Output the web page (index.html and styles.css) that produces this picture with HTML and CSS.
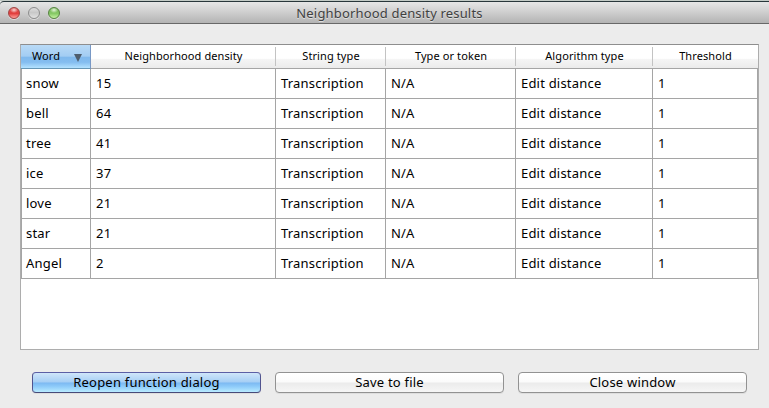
FILE: index.html
```html
<!DOCTYPE html>
<html lang="en">
<head>
<meta charset="utf-8">
<title>Neighborhood density results</title>
<link rel="stylesheet" href="styles.css">
</head>
<body>
<div class="window">
  <header class="titlebar">
    <div class="lights"><span class="light red"></span><span class="light gray"></span><span class="light green"></span></div>
    <h1 class="title">Neighborhood density results</h1>
  </header>
  <main class="content">
    <div class="table">
      <div class="row head">
        <div class="sorted"><span>Word</span><svg class="arrow" width="8" height="8" viewBox="0 0 8 8"><path d="M0 0H8L4 8Z"/></svg></div>
        <div>Neighborhood density</div><div>String type</div><div>Type or token</div><div>Algorithm type</div><div>Threshold</div>
      </div>
      <div class="row"><div>snow</div><div>15</div><div>Transcription</div><div>N/A</div><div>Edit distance</div><div>1</div></div>
      <div class="row"><div>bell</div><div>64</div><div>Transcription</div><div>N/A</div><div>Edit distance</div><div>1</div></div>
      <div class="row"><div>tree</div><div>41</div><div>Transcription</div><div>N/A</div><div>Edit distance</div><div>1</div></div>
      <div class="row"><div>ice</div><div>37</div><div>Transcription</div><div>N/A</div><div>Edit distance</div><div>1</div></div>
      <div class="row"><div>love</div><div>21</div><div>Transcription</div><div>N/A</div><div>Edit distance</div><div>1</div></div>
      <div class="row"><div>star</div><div>21</div><div>Transcription</div><div>N/A</div><div>Edit distance</div><div>1</div></div>
      <div class="row"><div>Angel</div><div>2</div><div>Transcription</div><div>N/A</div><div>Edit distance</div><div>1</div></div>
    </div>
    <div class="buttons">
      <button class="btn primary">Reopen function dialog</button>
      <button class="btn">Save to file</button>
      <button class="btn">Close window</button>
    </div>
  </main>
</div>
</body>
</html>
```
FILE: styles.css
```css
* { box-sizing: border-box; }
body {
  margin: 0;
  background: #ececec;
  color: #000;
  font: 13px "Noto Sans", "Open Sans", sans-serif;
  overflow: hidden;
}
.window {
  height: 408px;
  border-top: 1px solid #c3cbc6;
}
.titlebar {
  height: 23px;
  display: grid;
  grid-template-columns: 1fr auto 1fr;
  align-items: center;
  border-top: 1px solid #28363a;
  border-bottom: 1px solid #686868;
  border-top-left-radius: 4px;
  background: linear-gradient(#e6e6e6, #d0d0d0 45%, #b3b3b3);
}
.lights { display: flex; gap: 8px; padding-left: 8px; }
.light {
  width: 12px;
  height: 12px;
  border-radius: 50%;
  border: 1px solid #888;
  box-shadow: 0 1px 0 #dcdcdc;
}
.red { border-color: #a04442; background: radial-gradient(ellipse 4px 3px at 50% 2px, #fbd5d3, transparent), linear-gradient(#d95553, #e23f3e 55%, #ff9f9a); }
.gray { border-color: #8d8d8d; background: linear-gradient(#dedede, #c8c8c8 45%, #e2e2e2); }
.green { border-color: #55833f; background: radial-gradient(ellipse 4px 3px at 50% 2px, #e4f6da, transparent), linear-gradient(#7cb560, #86c965 55%, #c4f2a2); }
.title {
  margin: 0;
  font-size: 13px;
  font-weight: 400;
  line-height: 20px;
  color: #414141;
  text-shadow: 0 1px 0 #e0e0e0;
  letter-spacing: .17px;
  position: relative;
  left: 5px;
}
.content { padding: 20px 10px 0 20px; }
.table {
  height: 306px;
  background: #fff;
  border: 1px solid #adadad;
  border-top-color: #8e8e8e;
}
.row {
  display: grid;
  grid-template-columns: 69px 185px 110px 130px 137px 105px;
  width: 737px;
  height: 30px;
  border-left: 1px solid #a5a5a5;
}
.row > div {
  border-right: 1px solid #a5a5a5;
  border-bottom: 1px solid #a5a5a5;
  padding-left: 5px;
  line-height: 29px;
  letter-spacing: .2px;
  white-space: nowrap;
}
.row > div:first-child { padding-left: 4px; }
.head {
  grid-template-columns: 70px 185px 110px 130px 137px 105px;
  height: 24px;
  border-left: 0;
}
.head > div {
  padding: 0;
  text-align: center;
  font-size: 11px;
  line-height: 22px;
  letter-spacing: .1px;
  border-right: 0;
  background:
    linear-gradient(#c3c3c3, #c3c3c3) right 2px / 1px 19px no-repeat,
    linear-gradient(#fff 0 58%, #f5f5f5 62%, #ebebeb);
}
.head > div:last-child { background: linear-gradient(#fff 0 58%, #f5f5f5 62%, #ebebeb); }
.head > .sorted:first-child {
  display: flex;
  align-items: center;
  justify-content: space-between;
  padding: 0 8px 0 11px;
  border-right: 1px solid #7898c5;
  border-bottom-color: #6696b5;
  background: linear-gradient(#b9daf6, #a3cdf3 48%, #80b9ed 54%, #84bdf0 75%, #b4e2ff);
}
.sorted span { height: 23px; }
.arrow { fill: #4e5d6d; margin-top: 2px; }
.buttons {
  display: flex;
  gap: 14px;
  padding: 22px 0 0 12px;
}
.btn {
  width: 229px;
  height: 21px;
  padding: 0;
  border: 1px solid #929292;
  border-radius: 4px;
  background: linear-gradient(#fff, #fbfbfb 48%, #ebebeb 52%, #f6f6f6);
  box-shadow: 0 1px 0 #dedede;
  font: inherit;
  line-height: 19px;
  letter-spacing: .2px;
  color: #000;
}
.primary {
  border-color: #5c5fa5 #51548f #474a79;
  background: linear-gradient(#d0e6fa, #a5cef5 48%, #7cb9f2 52%, #8fccfa 72%, #b9ebff);
}
```
